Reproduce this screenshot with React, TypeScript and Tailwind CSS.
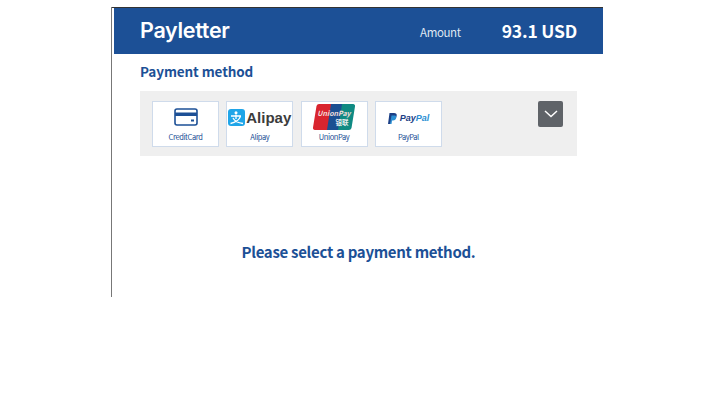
const font = '[font-family:"Noto_Sans_CJK_KR","Noto_Sans",sans-serif]'

function CardIcon() {
  return (
    <svg width="24" height="18" viewBox="0 0 24 18" fill="none">
      <rect x="1" y="1" width="22" height="16" rx="2" stroke="#1d5096" strokeWidth="1.6" />
      <rect x="1" y="4.5" width="22" height="3.5" fill="#1d5096" />
      <rect x="17" y="11.5" width="3" height="2" fill="#1d5096" />
    </svg>
  )
}

function AlipayLogo() {
  return (
    <div className="flex items-center h-[18px] gap-[1px]">
      <svg width="17" height="17" viewBox="0 0 17 17">
        <rect width="17" height="17" rx="3" fill="#1fa5e8" />
        <circle cx="8" cy="3.800" r="1.500" fill="#fff" />
        <path d="M3 7h10M8 5.500V10M12.500 7.500C11 11 7 13.500 2.500 14.500M5 9c1.500 3 6 5 10 5.500" stroke="#fff" strokeWidth="1.300" fill="none" />
      </svg>
      <span className="text-[15px] leading-none font-bold text-[#3c3c3c] [font-family:'Liberation_Sans',sans-serif]">Alipay</span>
    </div>
  )
}

function UnionPayLogo() {
  return (
    <svg width="42" height="26" viewBox="0 0 42 26">
      <path d="M6 0h14l-4 26H2a2 2 0 0 1-2-2.500L3.500 2A3 3 0 0 1 6 0Z" fill="#d9252f" />
      <path d="M18 0h13l-4 26H14Z" fill="#1b4f92" />
      <path d="M29 0h11a2 2 0 0 1 2 2.500L38.500 24A3 3 0 0 1 36 26H25Z" fill="#0f8a83" />
      <text x="21" y="12" textAnchor="middle" fontSize="7" fontWeight="700" fontStyle="italic" fill="#f4dedb">UnionPay</text>
      <text x="29" y="21" textAnchor="middle" fontSize="6.500" fontWeight="700" fill="#e8eef0">银联</text>
    </svg>
  )
}

function PayPalLogo() {
  return (
    <div className="flex items-center gap-[3px] h-[14px] mt-[2px]">
      <svg width="9" height="11" viewBox="0 0 9 11">
        <path d="M1.500 0H6c2 0 3 1 2.700 2.800C8.300 5 7 6 5 6H3.400L2.700 11H0Z" fill="#1b3f86" />
        <path d="M3.500 2.500H7c1 .3 1.500 1 1.300 2C8 6.500 6.800 7.500 5 7.500H4L3.500 11H2Z" fill="#2b8fd3" />
      </svg>
      <span className="text-[9px] leading-none font-bold italic text-[#1b3f86] [font-family:'Liberation_Sans',sans-serif]">
        Pay<span className="text-[#2b8fd3]">Pal</span>
      </span>
    </div>
  )
}

const methods = [
  { label: 'CreditCard', logo: <CardIcon /> },
  { label: 'Alipay', logo: <AlipayLogo /> },
  { label: 'UnionPay', logo: <UnionPayLogo /> },
  { label: 'PayPal', logo: <PayPalLogo /> },
]

export default function App() {
  return (
    <div className={`w-[720px] h-[405px] bg-white overflow-hidden pl-[111px] pt-[7px] ${font}`}>
      <div className="w-[492px] h-[290px] border-l border-[#777]">
        <div className="h-px bg-[#333]" />
        <header className="h-[46px] ml-[2px] bg-[#1c5096] flex items-center pl-[26px] pr-[26px] text-white">
          <h1 className="text-[21.500px] leading-none [font-family:Inter,sans-serif] font-semibold tracking-[-0.3px]">Payletter</h1>
          <span className="ml-auto text-[11.500px] mt-[3px] text-[#dfe7f2] tracking-[-0.4px]">Amount</span>
          <strong className="ml-[41px] text-[17.500px] font-bold leading-none tracking-[-0.2px] -mt-[1px]">93.1 USD</strong>
        </header>

        <div className="pl-[28px] pr-[26px]">
          <h2 className="mt-[8px] text-[13.500px] leading-[18px] font-bold text-[#1c5096] tracking-[-0.1px]">Payment method</h2>
          <div className="mt-[11px] h-[65px] bg-[#efefef] flex items-start pl-[12px] pr-[14px] pt-[10px]">
            <div className="flex gap-[7.300px]">
              {methods.map((m) => (
                <button key={m.label} className="w-[67px] h-[46px] bg-white border border-[#cfdbeb] flex flex-col items-center">
                  <span className="h-[30px] flex items-center justify-center">{m.logo}</span>
                  <span className="text-[7.500px] leading-[9px] text-[#1c5096] tracking-[-0.4px]">{m.label}</span>
                </button>
              ))}
            </div>
            <button className="ml-auto w-[25px] h-[26px] rounded-[2px] bg-[#5f6368] flex items-center justify-center">
              <svg width="14" height="8" viewBox="0 0 14 8" fill="none">
                <path d="M1 1l6 5.500L13 1" stroke="#fff" strokeWidth="1.500" />
              </svg>
            </button>
          </div>
          <p className="mt-[85px] text-center text-[15px] leading-[22px] font-bold text-[#1c5096] tracking-[-0.3px]">
            Please select a payment method.
          </p>
        </div>
      </div>
    </div>
  )
}
